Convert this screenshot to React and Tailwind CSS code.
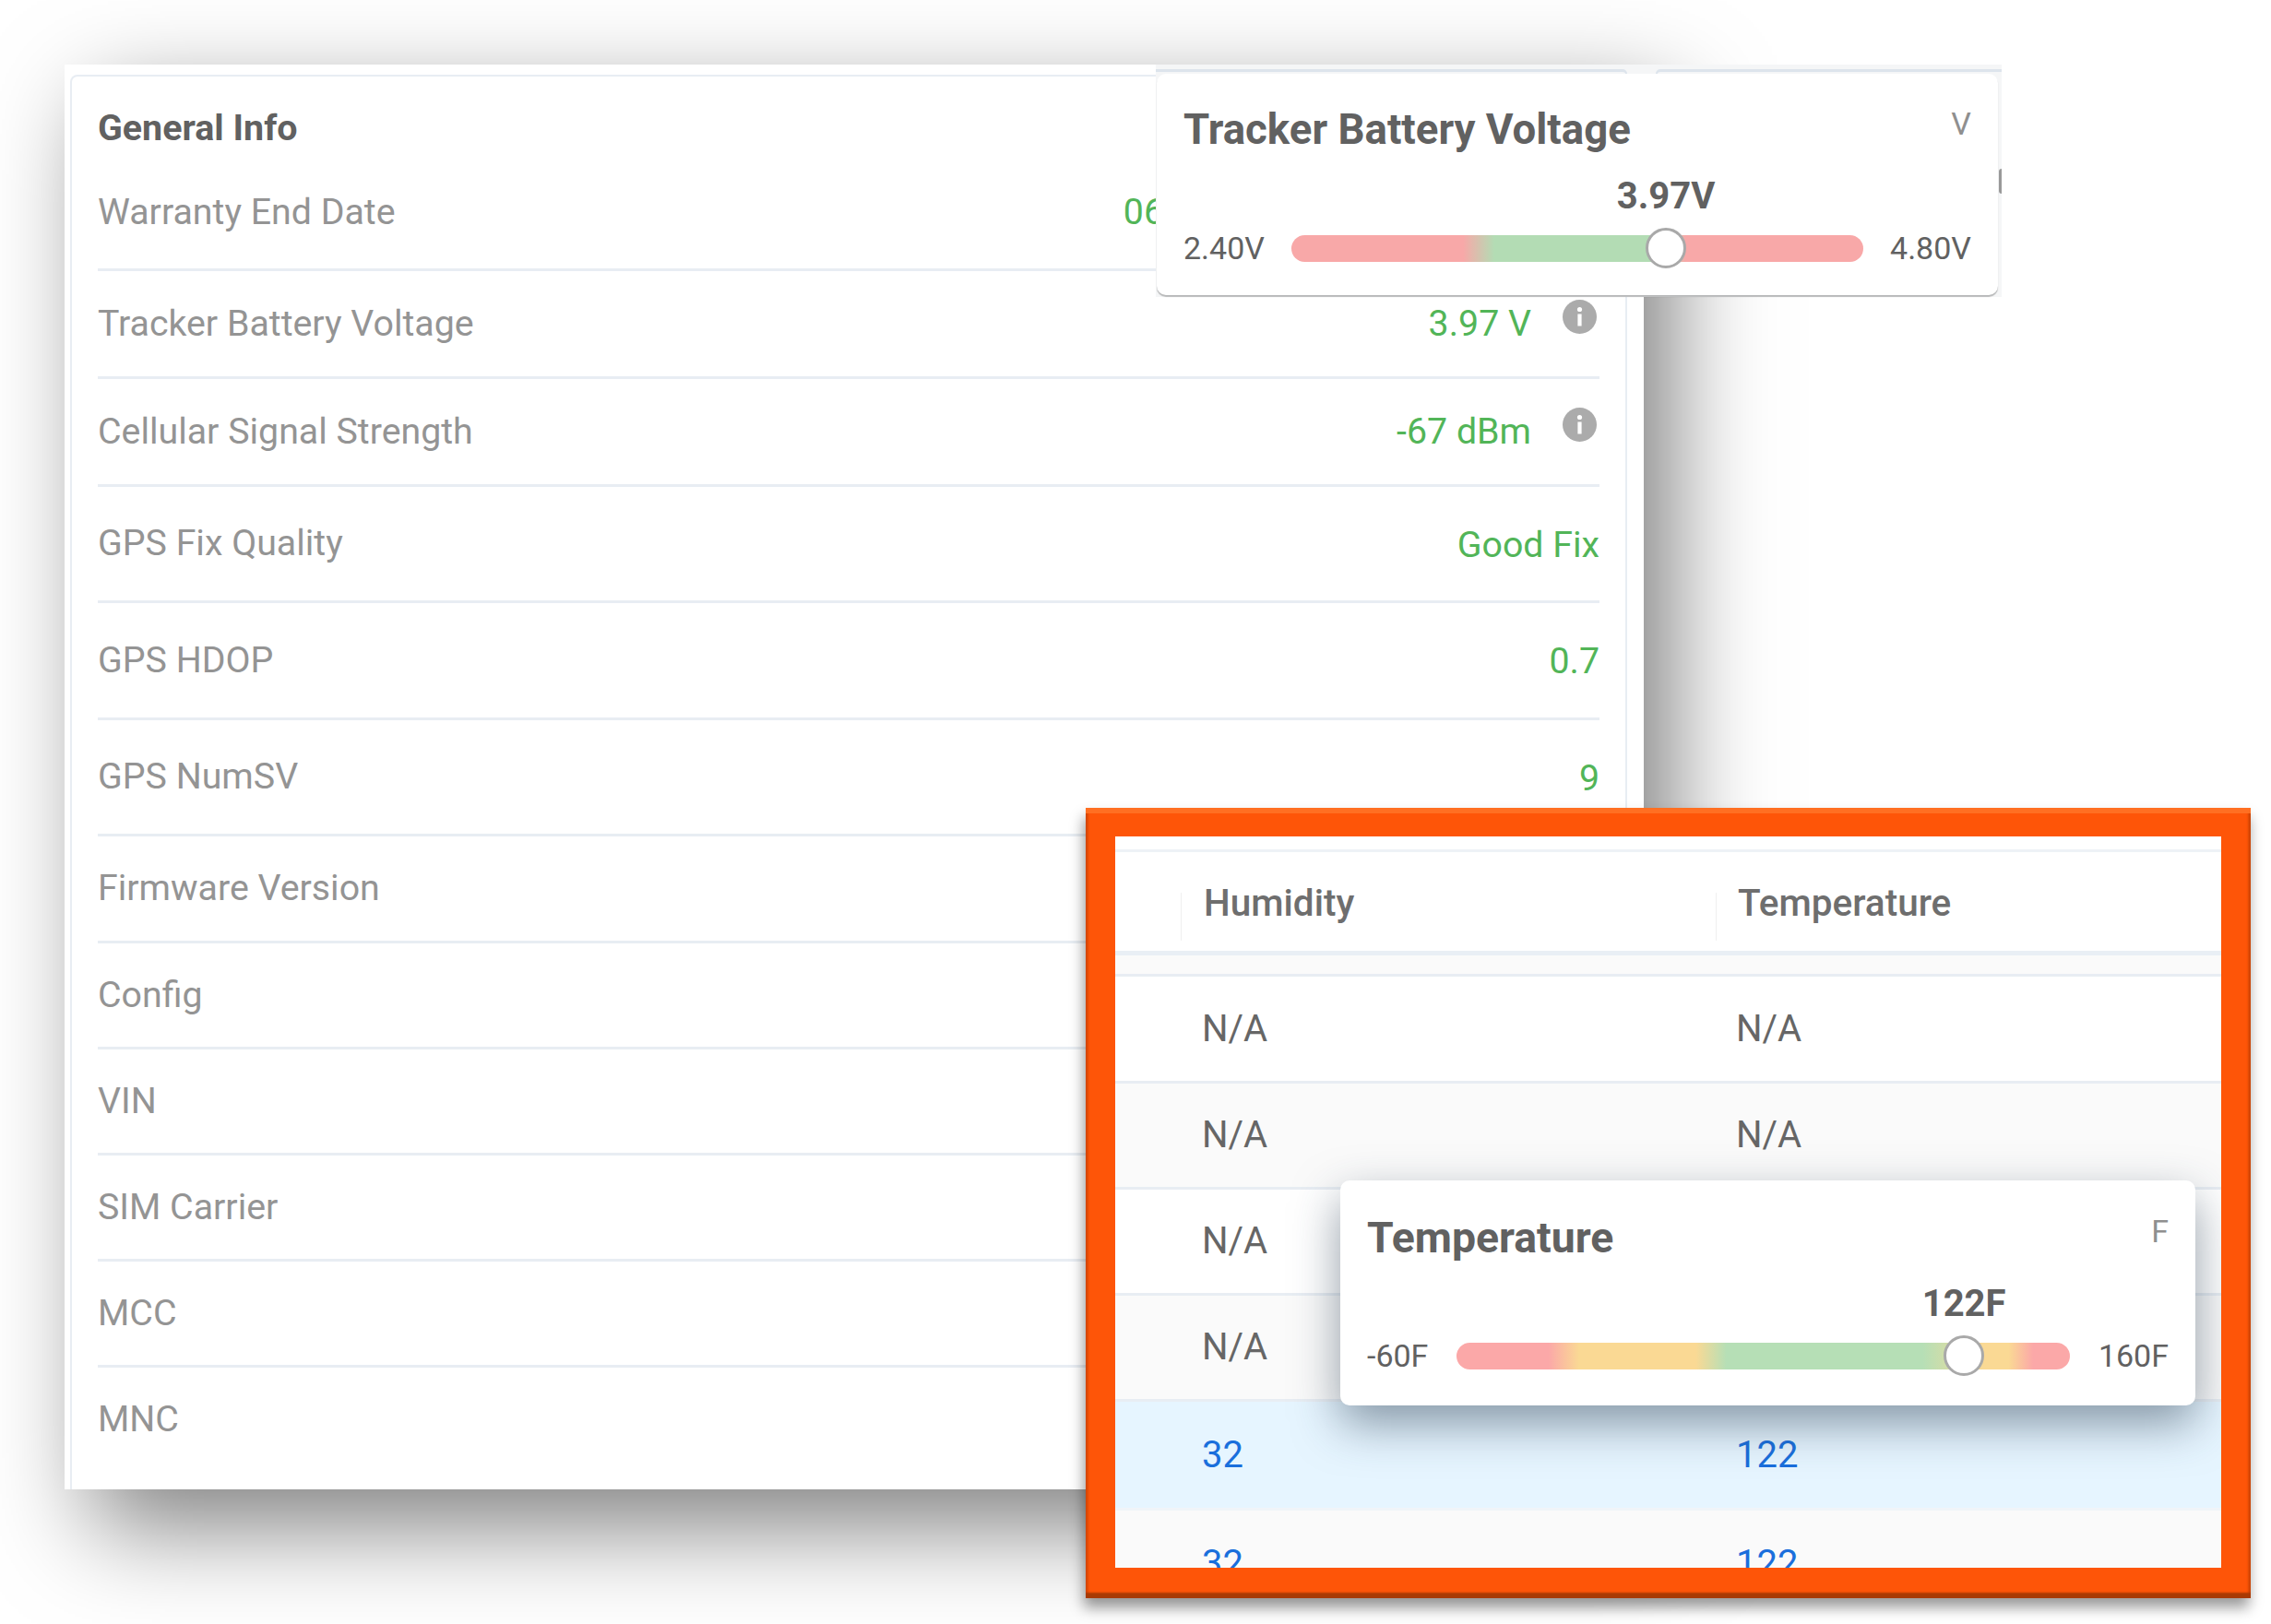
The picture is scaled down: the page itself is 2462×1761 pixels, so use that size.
import React from "react";

const infoRows = [
  { label: "Warranty End Date", value: "06", height: "h-[124px]", far: true },
  { label: "Tracker Battery Voltage", value: "3.97 V", height: "h-[117px]", info: true },
  { label: "Cellular Signal Strength", value: "-67 dBm", height: "h-[117px]", info: true },
  { label: "GPS Fix Quality", value: "Good Fix", height: "h-[126px]", low: true },
  { label: "GPS HDOP", value: "0.7", height: "h-[127px]", low: true },
  { label: "GPS NumSV", value: "9", height: "h-[126px]", low: true },
  { label: "Firmware Version", height: "h-[116px]" },
  { label: "Config", height: "h-[115px]" },
  { label: "VIN", height: "h-[115px]" },
  { label: "SIM Carrier", height: "h-[115px]" },
  { label: "MCC", height: "h-[115px]" },
  { label: "MNC", height: "h-[115px]", last: true },
];

const tableRows = [
  { a: "N/A", b: "N/A", className: "h-[116px] bg-white text-[#666] border-[#e8edf3]" },
  { a: "N/A", b: "N/A", className: "h-[115px] bg-[#fafafa] text-[#666] border-[#e8edf3]" },
  { a: "N/A", b: "N/A", className: "h-[115px] bg-white text-[#666] border-[#e8edf3]" },
  { a: "N/A", b: "N/A", className: "h-[115px] bg-[#fafafa] text-[#666] border-[#e8edf3]" },
  { a: "32", b: "122", className: "h-[118px] bg-[#e6f5ff] text-[#1a6fdc] border-[#f0f4f8]" },
  { a: "32", b: "122", className: "h-[118px] bg-[#fafafa] text-[#1a6fdc] border-transparent" },
];

const InfoIcon = () => (
  <svg width="37" height="37" viewBox="0 0 37 37" className="absolute right-[3px] top-[31px]">
    <circle cx="18.5" cy="18.5" r="18.5" fill="#ababab" />
    <circle cx="18.5" cy="10.5" r="2.6" fill="#fff" />
    <rect x="16.4" y="15.5" width="4.2" height="13" fill="#fff" />
  </svg>
);

const GaugeCard = ({ title, titleSize, unit, value, min, max, percent, gradient, className }) => (
  <div className={className}>
    <div className="flex items-start justify-between">
      <div className={`${titleSize} leading-[52px] font-bold text-[#616161]`}>{title}</div>
      <div className="text-[34px] leading-[38px] text-[#8f8f8f]">{unit}</div>
    </div>
    <div className="flex items-center justify-between mt-[80px]">
      <span className="text-[34px] leading-[44px] text-[#616161]">{min}</span>
      <div className={`relative h-[29px] w-[var(--track)] rounded-full ${gradient}`}>
        <div
          className="absolute top-[-8px] -translate-x-1/2 w-[44px] h-[44px] rounded-full bg-white border-[3px] border-[#a9a9a9]"
          style={{ left: `${percent}%` }}
        />
        <div
          className="absolute top-[-64px] -translate-x-1/2 text-[40px] leading-[44px] font-bold text-[#616161]"
          style={{ left: `${percent}%` }}
        >
          {value}
        </div>
      </div>
      <span className="text-[34px] leading-[44px] text-[#616161]">{max}</span>
    </div>
  </div>
);

export default function App() {
  return (
    <div className="relative w-[2462px] h-[1761px] overflow-hidden bg-white font-['Roboto',sans-serif]">
      <div className="pt-[70px] pl-[70px]">
        <div className="w-[1712px] h-[1545px] bg-white pl-[6px] pt-[11px] shadow-[30px_40px_100px_rgba(0,0,0,0.5)]">
          <div className="w-[1688px] h-[1534px] overflow-hidden rounded-t-[8px] border-2 border-b-0 border-[#e8edf3] px-[28px]">
            <div className="h-[87px] pt-[28px] text-[39.4px] leading-[56px] font-bold text-[#616161]">General Info</div>
            {infoRows.map((row) => (
              <div
                key={row.label}
                className={`relative flex items-center justify-between border-b-[3px] text-[39.3px] ${row.height} ${
                  row.last ? "border-transparent" : "border-[#e8edf3]"
                }`}
              >
                <span className="text-[#949494]">{row.label}</span>
                {row.value && (
                  <span
                    className={`text-[#52b558] ${row.info ? "mr-[74px]" : ""} ${row.far ? "mr-[472px]" : ""} ${
                      row.low ? "mt-[3px]" : ""
                    }`}
                  >
                    {row.value}
                  </span>
                )}
                {row.info && <InfoIcon />}
              </div>
            ))}
          </div>
        </div>
      </div>

      {/* pasted crop of the voltage tooltip */}
      <div className="absolute left-[1253px] top-[70px] w-[917px] h-[252px] bg-[#f5f6f7]">
        <div className="flex h-[10px] pt-[5px]">
          <div className="w-[511px] rounded-tr-[8px] border-t-[3px] border-r-2 border-[#dde4ec]" />
          <div className="ml-[31px] flex-1 rounded-tl-[8px] border-t-[3px] border-l-2 border-[#dde4ec]" />
        </div>
        <div className="absolute right-0 top-[113px] h-[27px] w-[3px] rounded-l-full bg-[#999]" />
        <GaugeCard
          title="Tracker Battery Voltage"
          titleSize="text-[45.6px]"
          unit="V"
          value="3.97V"
          min="2.40V"
          max="4.80V"
          percent={65.5}
          gradient="bg-[linear-gradient(to_right,#f8a8a8_30%,#b3dcb4_35.5%,#b3dcb4_65%,#f8a8a8_69%)]"
          className="[--track:620px] relative mx-[1px] w-[912px] h-[240px] rounded-[10px] bg-white pl-[29px] pr-[29px] pt-[35px] shadow-[0_2px_1px_rgba(0,0,0,0.25)]"
        />
      </div>

      <div className="absolute left-[1177px] top-[876px] w-[1263px] h-[857px] bg-[#fe5508] pt-[31px] px-[32px] shadow-[-2px_10px_14px_rgba(0,0,0,0.4),inset_0_6px_0_#ff6f22,inset_0_-6px_2px_#a83a04,inset_3px_0_2px_#e04a05,inset_-3px_0_2px_#d84805]">
        <div className="relative w-[1199px] h-[793px] overflow-hidden bg-white">
          <div className="mt-[14px] h-[110px] border-t-[3px] border-[#eef2f6]">
            <div className="relative grid grid-cols-[579px_1fr] pl-[96px] pt-[28px] text-[40.5px] leading-[54px] font-medium text-[#6e6e6e]">
              <span>Humidity</span>
              <span>Temperature</span>
              <div className="absolute left-[71px] top-[44px] w-[1px] h-[52px] bg-[#f0f0f0]" />
              <div className="absolute left-[651px] top-[44px] w-[1px] h-[52px] bg-[#f0f0f0]" />
            </div>
          </div>
          <div className="h-[28px] border-t-[5px] border-b-[3px] border-t-[#e9eff5] border-b-[#e8edf3] bg-[#fafafa]" />
          {tableRows.map((row, i) => (
            <div
              key={i}
              className={`grid grid-cols-[579px_1fr] items-center border-b-[3px] pl-[94px] text-[40px] ${row.className}`}
            >
              <span>{row.a}</span>
              <span>{row.b}</span>
            </div>
          ))}
          <GaugeCard
            title="Temperature"
            titleSize="text-[46.4px]"
            unit="F"
            value="122F"
            min="-60F"
            max="160F"
            percent={82.7}
            gradient="bg-[linear-gradient(to_right,#fba8a8_15%,#fad994_20%,#fad994_39%,#b6dfb6_44%,#b6dfb6_76%,#fad994_86%,#fad994_90%,#fba8a8_94%)]"
            className="[--track:665px] absolute left-[244px] top-[373px] w-[927px] h-[244px] rounded-[10px] bg-white px-[29px] pt-[36px] shadow-[0_20px_50px_rgba(40,60,80,0.5)]"
          />
        </div>
      </div>
    </div>
  );
}
